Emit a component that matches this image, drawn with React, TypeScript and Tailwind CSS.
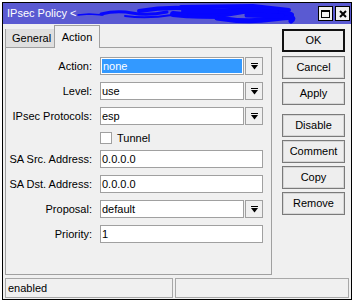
import React from 'react';

const DropIcon = () => (
  <svg width="7" height="7" viewBox="0 0 7 7">
    <rect x="0" y="0" width="7" height="1" fill="#000" />
    <polygon points="0,2 7,2 3.5,6.5" fill="#000" />
  </svg>
);

const DropButton = () => (
  <div className="w-[18px] h-[18px] border border-[#a0a0a0] bg-[#f0f0f0] flex items-center justify-center">
    <DropIcon />
  </div>
);

const Field = ({ value, wide = true }: { value: string; wide?: boolean }) => (
  <div
    className={`${wide ? 'w-[163px]' : 'w-[144px]'} h-[18px] border border-[#a0a0a0] bg-white flex items-center pl-[1px] text-black`}
  >
    {value}
  </div>
);

const Row = ({ label, children }: { label: string; children: React.ReactNode }) => (
  <div className="flex items-center h-[18px] gap-[8px]">
    <div className="w-[86px] text-right text-black">{label}</div>
    {children}
  </div>
);

const Button = ({ label, primary }: { label: string; primary?: boolean }) => (
  <div
    className={`w-[63px] h-[23px] flex items-center justify-center bg-[#eeeeee] text-black ${
      primary
        ? 'border-2 border-[#111]'
        : 'border border-[#7a7a7a] shadow-[inset_0_0_0_1px_#d6d6d6]'
    }`}
  >
    {label}
  </div>
);

export default function App() {
  return (
    <div className="w-[355px] h-[304px] bg-white pt-[2px] pl-[2px] overflow-hidden font-['Liberation_Sans',Arial,sans-serif] text-[11px] leading-none">
      <div className="w-[350px] h-[298px] border border-black bg-[#f0f0f0] flex flex-col">
        {/* title bar */}
        <div className="h-[21px] bg-[#5a5ad2] flex items-center pl-[4px] pr-[1px] text-white">
          <span className="whitespace-nowrap">IPsec Policy &lt;</span>
          <svg width="222" height="21" viewBox="0 0 222 21" className="ml-[1px]">
            <g fill="none" stroke="#0606ff" strokeLinecap="round" strokeLinejoin="round">
              <path d="M1 12 L12 11 L26 12" strokeWidth="1.5" />
              <path d="M24 11 Q40 7 55 10 T 90 9" strokeWidth="3" />
              <path d="M48 13 Q70 16 95 12" strokeWidth="2" />
              <path d="M62 8 Q92 3 120 6 T 180 5" strokeWidth="4" />
              <path d="M96 11 Q130 15 160 9 T 214 12" strokeWidth="6" />
              <path d="M104 4 L176 3 L212 7" strokeWidth="4" />
              <path d="M140 15 Q170 20 196 16 T 214 18" strokeWidth="5" />
              <path d="M106 8 L200 9" strokeWidth="4" />
              <path d="M112 13 L140 14" strokeWidth="4" />
              <path d="M170 12 L205 13" strokeWidth="5" />
            </g>
          </svg>
          <div className="ml-auto flex gap-[2px]">
            <div className="w-[15px] h-[15px] border border-black bg-[#f0f0f0] flex items-center justify-center">
              <div className="w-[9px] h-[8px] border border-black border-t-2" />
            </div>
            <div className="w-[15px] h-[15px] border border-black bg-[#f0f0f0] flex items-center justify-center">
              <svg width="8" height="8" viewBox="0 0 8 8">
                <path d="M1 1 L7 7 M7 1 L1 7" stroke="#000" strokeWidth="2" />
              </svg>
            </div>
          </div>
        </div>

        {/* main */}
        <div className="flex pt-[1px]">
          <div className="ml-[2px] w-[267px] flex flex-col">
            <div className="h-[23px] flex">
              <div className="self-end w-[49px] h-[19px] border-l border-[#a0a0a0] border-b flex">
                <div className="flex-1 bg-[#dfdfdf] flex items-center pl-[6px] text-black">General</div>
              </div>
              <div className="w-[46px] h-[23px] border-t border-l border-r border-[#a0a0a0] bg-[#f0f0f0] flex items-center justify-center text-black">
                Action
              </div>
              <div className="self-end flex-1 h-px bg-[#a0a0a0]" />
            </div>
            <div className="h-[227px] border-l border-r border-b border-[#a0a0a0] pt-[9px] flex flex-col gap-[7px]">
              <Row label="Action:">
                <div className="flex gap-[1px]">
                  <div className="w-[144px] h-[18px] border border-[#a0a0a0] bg-white p-px">
                    <div className="h-full bg-[#3399ff] text-white flex items-center pl-px">none</div>
                  </div>
                  <DropButton />
                </div>
              </Row>
              <Row label="Level:">
                <div className="flex gap-[1px]">
                  <Field value="use" wide={false} />
                  <DropButton />
                </div>
              </Row>
              <Row label="IPsec Protocols:">
                <div className="flex gap-[1px]">
                  <Field value="esp" wide={false} />
                  <DropButton />
                </div>
              </Row>
              <div className="h-[11px] flex items-start gap-[8px]">
                <div className="w-[86px]" />
                <div className="flex items-center gap-[5px]">
                  <div className="w-[12px] h-[12px] border border-[#a0a0a0] bg-white" />
                  <span className="text-black">Tunnel</span>
                </div>
              </div>
              <Row label="SA Src. Address:">
                <Field value="0.0.0.0" />
              </Row>
              <Row label="SA Dst. Address:">
                <Field value="0.0.0.0" />
              </Row>
              <Row label="Proposal:">
                <div className="flex gap-[1px]">
                  <Field value="default" wide={false} />
                  <DropButton />
                </div>
              </Row>
              <Row label="Priority:">
                <Field value="1" />
              </Row>
            </div>
          </div>

          <div className="ml-[10px] pt-[4px] flex flex-col">
            <Button label="OK" primary />
            <div className="mt-[4px] flex flex-col gap-[3px]">
              <Button label="Cancel" />
              <Button label="Apply" />
            </div>
            <div className="mt-[9px] flex flex-col gap-[3px]">
              <Button label="Disable" />
              <Button label="Comment" />
              <Button label="Copy" />
              <Button label="Remove" />
            </div>
          </div>
        </div>

        {/* status bar */}
        <div className="mt-[3px] h-[20px] flex gap-[2px] px-[2px]">
          <div className="w-[168px] border border-[#a8a8a8] flex items-center pl-[2px] text-black">enabled</div>
          <div className="flex-1 border border-[#a8a8a8]" />
        </div>
      </div>
    </div>
  );
}
